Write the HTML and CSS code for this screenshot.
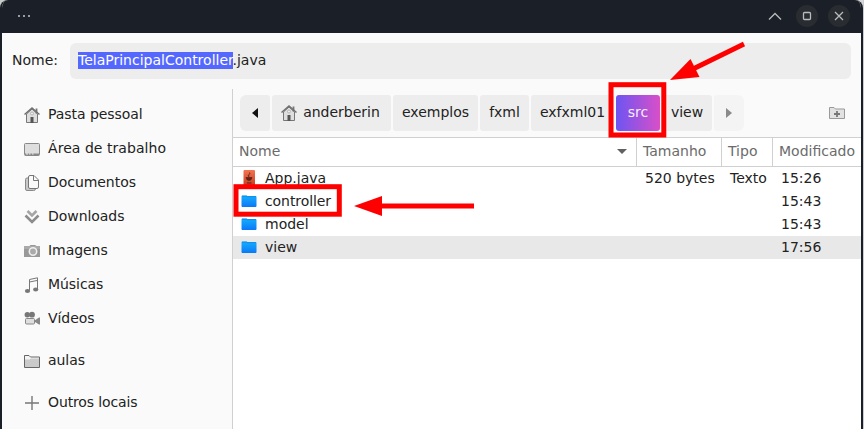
FILE: index.html
```html
<!DOCTYPE html>
<html lang="pt-BR">
<head>
<meta charset="utf-8">
<title>Salvar</title>
<link rel="stylesheet" href="styles.css">
</head>
<body>
<svg class="defs" width="0" height="0">
  <defs>
    <linearGradient id="blue" x1="0" y1="0" x2="0" y2="1"><stop offset="0" stop-color="#16b0fb"/><stop offset="1" stop-color="#0b78f8"/></linearGradient>
    <linearGradient id="java" x1="0" y1="0" x2="0" y2="1"><stop offset="0" stop-color="#f37350"/><stop offset="1" stop-color="#c43e21"/></linearGradient>
    <symbol id="home" viewBox="0 0 16 16">
      <path d="M2.500 7V15.500H13.500V7L8 2z" fill="#dedede" stroke="#777"/>
      <path d="M12.500 1.500v5" stroke="#777" stroke-width="1.800"/>
      <path d="M.5 7.500L8 1l7.500 6.500" fill="none" stroke="#707070" stroke-width="1.500"/>
      <circle cx="8" cy="6.500" r="1.500" fill="#eee" stroke="#aaa" stroke-width=".8"/>
      <path d="M6.500 10h3v6h-3z" fill="#555"/>
    </symbol>
    <symbol id="folder" viewBox="0 0 16 12">
      <path d="M.5 1.500Q.5.500 1.500.500H5.500L6.500 1H14.500Q15.500 1 15.500 2V11Q15.500 12 14.500 12H1.500Q.5 12 .5 11z" fill="url(#blue)"/>
      <path d="M1 1.200H5.700L6.500 1.700H15" fill="none" stroke="#0c83ed" stroke-width=".8"/>
    </symbol>
  </defs>
</svg>
<div class="window">
  <header class="titlebar">
    <div class="dots"><i></i><i></i><i></i></div>
    <div class="controls">
      <span class="ctl plain"><svg width="22" height="22"><path d="M5 14.500L11 8.500L17 14.500" /></svg></span>
      <span class="ctl"><svg width="22" height="22"><rect x="7.500" y="7.500" width="7" height="7" rx="1"/></svg></span>
      <span class="ctl"><svg width="22" height="22"><path d="M7 7l8 8M15 7l-8 8"/></svg></span>
    </div>
  </header>
  <div class="name-row">
    <label>Nome:</label>
    <div class="entry"><span class="selected">TelaPrincipalController</span>.java</div>
  </div>
  <div class="body">
    <nav class="sidebar">
      <div class="place"><svg width="16" height="16"><use href="#home"/></svg>Pasta pessoal</div>
      <div class="place desktop"><svg width="16" height="16"><rect x=".5" y="2.500" width="15" height="12" rx="1" fill="#dedede" stroke="#888"/><path d="M1 13.500h14" stroke="#888" stroke-width="2"/><path d="M2 13h2M5 13h1.500M8 13h1.500" stroke="#eee"/></svg>Área de trabalho</div>
      <div class="place"><svg width="16" height="16"><path d="M4 3H3Q1.500 3 1.500 4.500V14Q1.500 15.500 3 15.500H9.500Q11.500 15.500 11.500 14" fill="#c8c8c8" stroke="#8a8a8a"/><path d="M4.500 2Q4.500.5 6 .5H10L14.500 5V12Q14.500 13.500 13 13.500H6Q4.500 13.500 4.500 12z" fill="#fafafa" stroke="#777"/><path d="M9.500.5V5.500H14" fill="none" stroke="#777"/></svg>Documentos</div>
      <div class="place"><svg width="16" height="16" fill="none" stroke="#8c8c8c" stroke-width="2.600"><path d="M3.500 2L8 6.500L12.500 2" stroke="#a5a5a5"/><path d="M1.500 6.500L8 13L14.500 6.500"/></svg>Downloads</div>
      <div class="place"><svg width="16" height="16"><path d="M0 4Q0 3 1 3H5.500L6.500 2H11L12.500 3H15Q16 3 16 4V14H0z" fill="#999"/><path d="M0 4Q0 3 1 3H15Q16 3 16 4V6H0z" fill="#aaa"/><circle cx="9" cy="8.500" r="3.700" fill="#aaa" stroke="#eee" stroke-width="1.600"/></svg>Imagens</div>
      <div class="place"><svg width="16" height="16" fill="none" stroke="#777"><path d="M5.500 13.500V2.500L13.500.8V12M5.500 5L14 3.300"/><ellipse cx="3.500" cy="14" rx="2.600" ry="1.900" fill="#777" stroke="none"/><ellipse cx="11.700" cy="12.500" rx="2.600" ry="1.900" fill="#777" stroke="none"/></svg>Músicas</div>
      <div class="place"><svg width="16" height="16"><circle cx="3.300" cy="3.700" r="2.700" fill="#777"/><circle cx="8" cy="3.700" r="2.900" fill="#777"/><rect x="1.500" y="7.500" width="9" height="5.500" rx="1" fill="#dedede" stroke="#888"/><path d="M11 9.300L15 6.500h1v7h-1L11 11z" fill="#888"/></svg>Vídeos</div>
      <div class="place bookmark"><svg width="16" height="16"><path d="M.5 14.500V2.500H5L6.500 4H15.500V14.500z" fill="#f4f4f4" stroke="#666"/><path d="M1 6.500H5.500L7 5.500H15V14H1z" fill="#cacaca"/></svg>aulas</div>
      <div class="place other"><svg width="16" height="16"><path d="M1 8h14M8 1v14" stroke="#777" stroke-width="1.400"/></svg>Outros locais</div>
    </nav>
    <main class="browser">
      <div class="pathbar">
        <div class="crumb w-arrow first"><svg width="6" height="10"><path d="M6 0V10L0 5z" fill="#111"/></svg></div>
        <div class="crumb w-home"><svg width="16" height="16"><use href="#home"/></svg>anderberin</div>
        <div class="crumb w-exemplos">exemplos</div>
        <div class="crumb w-fxml">fxml</div>
        <div class="crumb w-project">exfxml01</div>
        <div class="crumb w-src active">src</div>
        <div class="crumb w-view">view</div>
        <div class="crumb w-arrow last"><svg width="6" height="10"><path d="M0 0V10L6 5z" fill="#8a8a8a"/></svg></div>
        <svg class="new-folder" width="16" height="14"><path d="M.5 12.500V1.500H5L6.500 3H15.500V12.500z" fill="#e2e2e2" stroke="#999"/><path d="M5 8h6M8 5v6" stroke="#777" stroke-width="1.800"/></svg>
      </div>
      <div class="row head">
        <div class="cell">Nome<svg width="10" height="5"><path d="M0 0H10L5 5z" fill="#606060"/></svg></div>
        <div class="cell">Tamanho</div><div class="cell">Tipo</div><div class="cell">Modificado</div>
      </div>
      <div class="row"><div class="cell"><svg width="16" height="16"><path d="M2.500 1Q2.500 0 3.500 0H13Q14 0 14 1V15Q14 16 13 16H3.500Q2.500 16 2.500 15z" fill="url(#java)"/><path d="M5 7.500H11Q10.500 10.500 8 10.500T5 7.500zM8 7Q6.500 5.500 8 4.500T8.500 2.500" fill="#612218" stroke="#612218" stroke-width=".8"/><path d="M6 13h4.500" stroke="#9b2f1c" stroke-width="2"/></svg>App.java</div><div class="cell">520 bytes</div><div class="cell">Texto</div><div class="cell">15:26</div></div>
      <div class="row"><div class="cell"><svg width="16" height="12"><use href="#folder"/></svg><span class="tight">controller</span></div><div class="cell"></div><div class="cell"></div><div class="cell">15:43</div></div>
      <div class="row"><div class="cell"><svg width="16" height="12"><use href="#folder"/></svg>model</div><div class="cell"></div><div class="cell"></div><div class="cell">15:43</div></div>
      <div class="row current"><div class="cell"><svg width="16" height="12"><use href="#folder"/></svg>view</div><div class="cell"></div><div class="cell"></div><div class="cell">17:56</div></div>
    </main>
  </div>
</div>
<svg class="annotations" width="864" height="429" fill="none" stroke="#f00" stroke-width="5">
  <rect x="611" y="84.700" width="52.800" height="50.300"/>
  <rect x="236" y="186.700" width="103.300" height="27.500"/>
  <path d="M744 44L694 68.500M474 206H380"/>
  <path d="M670 80L690.500 59L699.500 77zM354 206L382 196V216z" fill="#f00" stroke="none"/>
</svg>
</body>
</html>
```
FILE: styles.css
```css
* { box-sizing: border-box; }
body {
  margin: 0;
  height: 429px;
  overflow: hidden;
  background: linear-gradient(#c9ccd0, #c9ccd0) right / 1px 100% no-repeat, linear-gradient(#c5cec8, #c5cec8) 0 0 / 8px 8px no-repeat, #d8d8dc;
  font: 14px/20px "DejaVu Sans", sans-serif;
  color: #222;
}
svg { display: block; flex: none; }
.defs { position: absolute; }
.window {
  width: 863px;
  height: 429px;
  border: solid #1b1f27;
  border-width: 0 2px;
  border-radius: 8px 8px 0 0;
  background: #fafafa;
  overflow: hidden;
}
.titlebar {
  height: 33px;
  background: #1b1f27;
  display: flex;
  justify-content: space-between;
  padding: 5px 11px 0 16px;
}
.dots { display: flex; gap: 3px; padding-top: 10px; }
.dots i { width: 2px; height: 2px; background: #9a9b9e; }
.controls { display: flex; gap: 10px; }
.ctl { width: 22px; height: 22px; border-radius: 50%; background: #292c31; }
.ctl.plain { background: none; }
.ctl svg { fill: none; stroke: #b9bbbd; stroke-width: 1.3; }
.name-row {
  display: flex;
  align-items: center;
  height: 56px;
  padding: 10px;
}
.name-row label { width: 58px; padding-bottom: 2px; }
.entry {
  flex: 1;
  height: 36px;
  padding: 9px 8px;
  border-radius: 6px;
  background: #ededed;
  line-height: 17px;
  white-space: nowrap;
}
.selected { background: #5468ff; color: #fff; padding-bottom: 1px; }
.body { display: flex; height: 340px; }
.sidebar { width: 230px; padding-top: 8px; }
.place {
  display: flex;
  align-items: center;
  gap: 8px;
  height: 34px;
  padding-left: 22px;
  letter-spacing: -0.05px;
}
.place svg { margin-top: 2px; }
.desktop { letter-spacing: 0.05px; }
.bookmark { margin-top: 8px; }
.other { margin-top: 8px; letter-spacing: -0.12px; }
.tight { letter-spacing: -0.08px; }
.browser { flex: 1; min-width: 0; border-left: 1px solid #d0d0d0; background: #fff; }
.pathbar {
  display: flex;
  align-items: center;
  gap: 2px;
  height: 49px;
  padding: 0 16px 1px 7px;
  border-bottom: 1px solid #d0d0d0;
  background: #fafafa;
}
.crumb {
  display: flex;
  align-items: center;
  justify-content: center;
  gap: 6px;
  height: 36px;
  border-radius: 3px;
  background: #ededed;
  padding-bottom: 2px;
}
.crumb svg { position: relative; top: 1px; }
.w-arrow { width: 30px; }
.first { border-radius: 6px 3px 3px 6px; }
.last { border-radius: 3px 6px 6px 3px; background: #f4f4f4; }
.w-home { width: 119px; padding-right: 2px; }
.w-exemplos { width: 85px; }
.w-fxml { width: 49px; }
.w-project { width: 83px; }
.w-src { width: 44px; }
.w-view { width: 50px; }
.active { background: linear-gradient(90deg, #6c55f2, #d94fc8); color: #f4eefc; }
.new-folder { margin-left: auto; }
.row {
  display: grid;
  grid-template-columns: 404px 85px 51px 1fr;
  height: 23px;
}
.cell { display: flex; align-items: center; gap: 8px; padding: 0 0 2px 8px; white-space: nowrap; }
.head { height: 29px; color: #6b6b6b; border-bottom: 1px solid #d0d0d0; }
.head .cell { border-right: 1px solid #d0d0d0; padding-left: 6px; }
.head .cell:last-child { border-right: 0; }
.head .cell:first-child { justify-content: space-between; padding-right: 9px; }
.current { background: #e8e8e8; }
.annotations { position: absolute; left: 0; top: 0; }
```
